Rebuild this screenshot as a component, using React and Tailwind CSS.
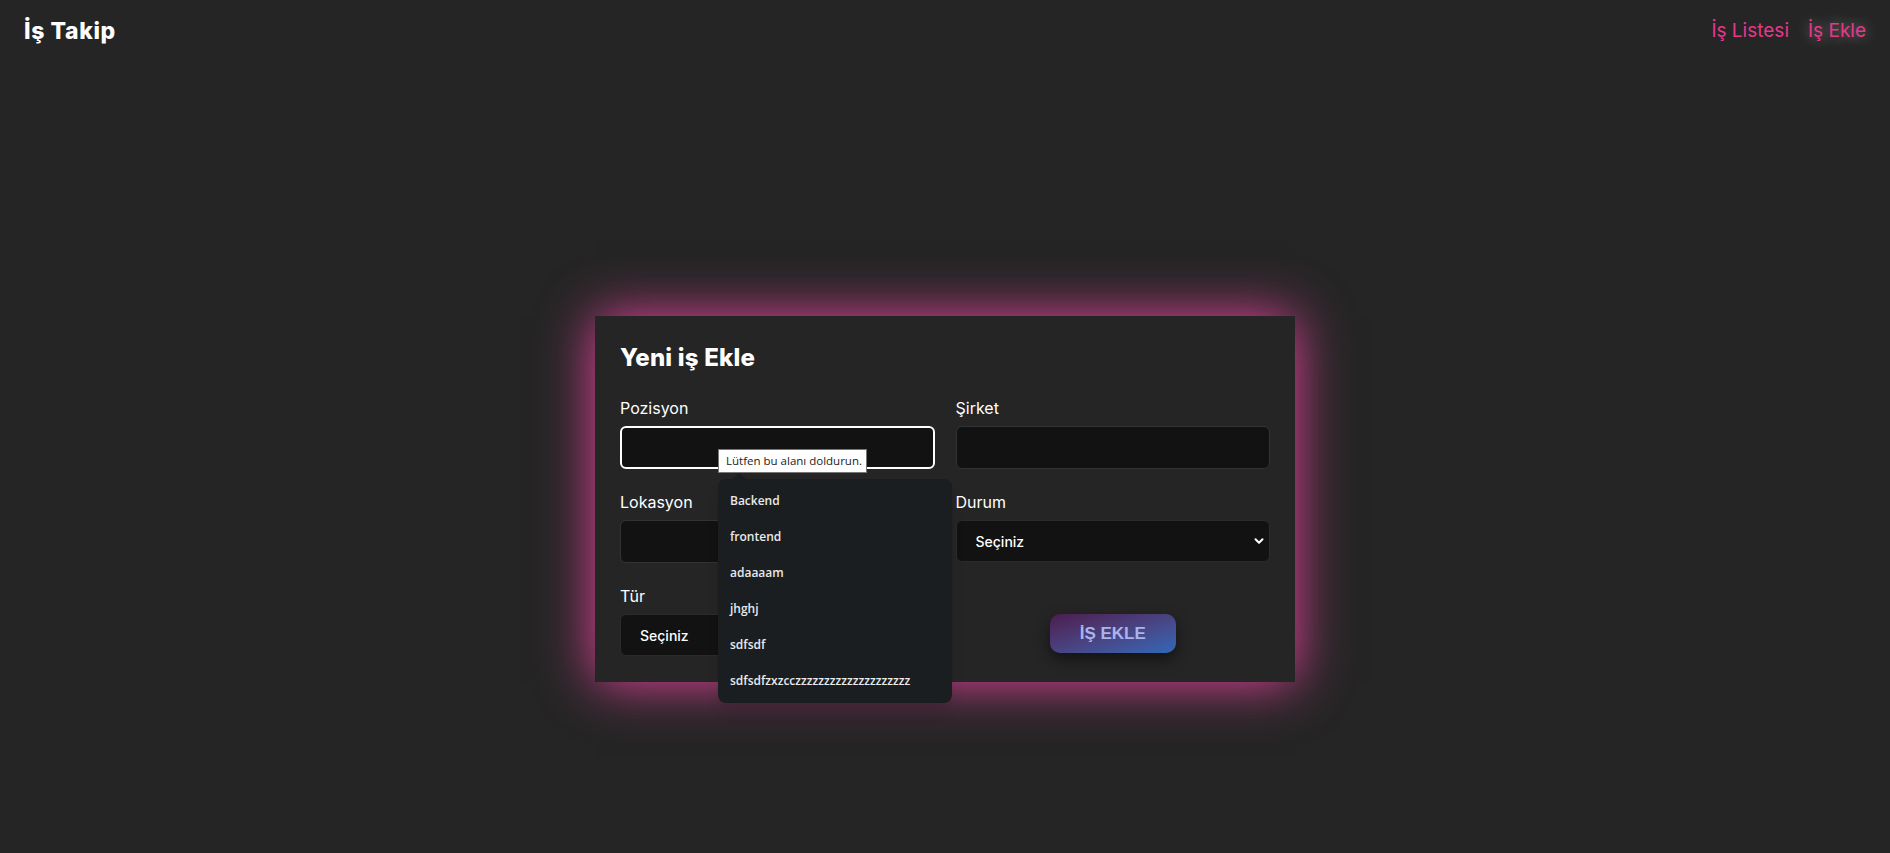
import { ChevronDown } from 'lucide-react';

const suggestions = ['Backend', 'frontend', 'adaaaam', 'jhghj', 'sdfsdf', 'sdfsdfzxzcczzzzzzzzzzzzzzzzzzzz'];

const Label = ({ children }) => (
  <label className="block text-[16px] leading-6 text-white mb-[6px]">{children}</label>
);

const TextInput = ({ focused }) => (
  <input
    type="text"
    className={`block w-full h-[43px] rounded-md bg-[#121212] outline-none ${focused ? 'border-2 border-white' : 'border border-[#333333]'}`}
  />
);

const Select = () => (
  <div className="relative h-[42px] rounded-md bg-[#121212] border border-[#2b2b2b] flex items-center pl-[19px]">
    <span className="text-[14px] font-medium text-white">Seçiniz</span>
    <ChevronDown className="absolute right-[3px] top-1/2 -translate-y-1/2 text-white" size={14} strokeWidth={3.5} />
  </div>
);

export default function App() {
  return (
    <div className="min-h-screen bg-[#252525] font-['Inter',sans-serif]">
      <header className="flex justify-between items-start pt-[15px] px-[24px]">
        <h1 className="text-[23px] leading-8 font-extrabold tracking-[0.6px] text-white">İş Takip</h1>
        <nav className="flex items-center gap-[19px] pt-[2px]">
          <a className="text-[19px] leading-7 text-[#e6388b]">İş Listesi</a>
          <a className="text-[19px] leading-7 text-[#e6388b] [text-shadow:0_0_14px_rgba(255,255,255,0.45)]">İş Ekle</a>
        </nav>
      </header>

      <main className="flex justify-center pt-[269px]">
        <div className="w-[700px] bg-[#252525] px-[25px] pt-[26px] pb-[26px] shadow-[0_0_50px_#e9449f]">
          <h2 className="text-[24px] leading-8 font-extrabold tracking-[0.2px] text-white mb-[22px]">Yeni iş Ekle</h2>
          <div className="grid grid-cols-2 gap-x-[21px] gap-y-[21px]">
            <div className="relative">
              <Label>Pozisyon</Label>
              <TextInput focused />
              {/* browser validation bubble + autocomplete list */}
              <div className="absolute left-[98px] top-[53px] z-20 w-[149px] h-[24px] bg-white border border-[#767676] flex items-center pl-[7px] font-['Open_Sans',sans-serif] text-[11.5px] text-[#222]">
                Lütfen bu alanı doldurun.
              </div>
              <div className="absolute left-[98px] top-[83px] z-10 w-[234px] rounded-lg bg-[#1b1e20] py-1 font-['Open_Sans',sans-serif] shadow-lg">
                <div className="absolute -top-[6px] left-[14px] w-0 h-0 border-l-[7px] border-r-[7px] border-b-[6px] border-l-transparent border-r-transparent border-b-[#1b1e20]" />
                {suggestions.map((s) => (
                  <div key={s} className="h-9 flex items-center px-3 text-[12px] font-semibold text-[#e8eaed]">{s}</div>
                ))}
              </div>
            </div>
            <div>
              <Label>Şirket</Label>
              <TextInput />
            </div>
            <div>
              <Label>Lokasyon</Label>
              <TextInput />
            </div>
            <div>
              <Label>Durum</Label>
              <Select />
            </div>
            <div>
              <Label>Tür</Label>
              <Select />
            </div>
            <div className="flex flex-col">
              <div className="h-6 mb-[6px]" />
              <div className="flex justify-center">
                <button className="w-[126px] h-[39px] rounded-[10px] bg-gradient-to-br from-[#4b1c4e] to-[#2d68b9] text-[17px] font-bold text-[#a9b4ec] font-['Liberation_Sans',sans-serif] shadow-[0_6px_14px_rgba(0,0,0,0.5)]">
                  İŞ EKLE
                </button>
              </div>
            </div>
          </div>
        </div>
      </main>
    </div>
  );
}
